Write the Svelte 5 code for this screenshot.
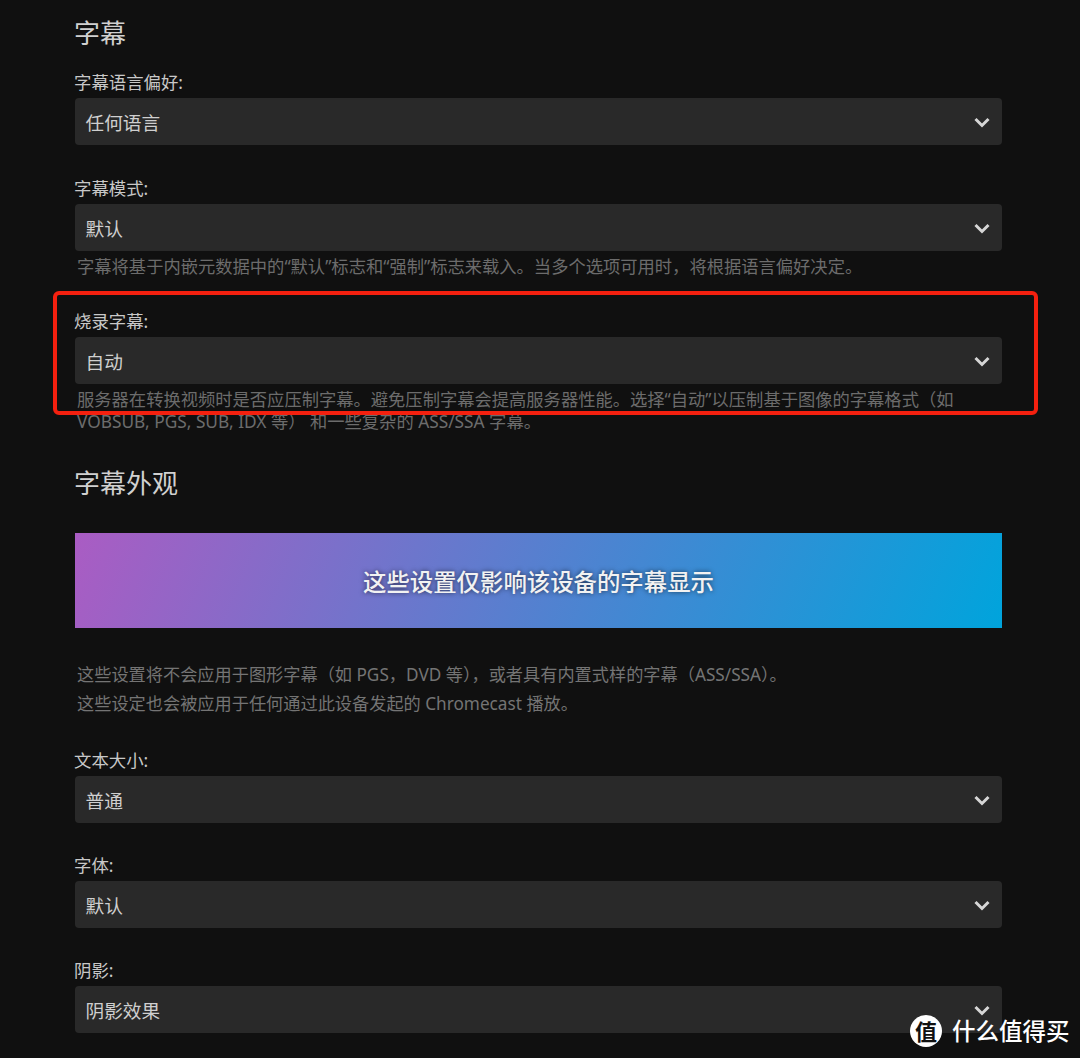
<script lang="ts">
  const subtitleFields = [
    { label: '字幕语言偏好:', value: '任何语言' },
    {
      label: '字幕模式:',
      value: '默认',
      help: ['字幕将基于内嵌元数据中的“默认”标志和“强制”标志来载入。当多个选项可用时，将根据语言偏好决定。']
    },
    {
      label: '烧录字幕:',
      value: '自动',
      help: [
        '服务器在转换视频时是否应压制字幕。避免压制字幕会提高服务器性能。选择“自动”以压制基于图像的字幕格式（如',
        'VOBSUB, PGS, SUB, IDX 等） 和一些复杂的 ASS/SSA 字幕。'
      ]
    }
  ];

  const appearanceFields = [
    { label: '文本大小:', value: '普通' },
    { label: '字体:', value: '默认' },
    { label: '阴影:', value: '阴影效果' }
  ];
</script>

{#snippet selectField(field)}
  <div class="field">
    <div class="label">{field.label}</div>
    <div class="select">
      <span>{field.value}</span>
      <svg class="chevron" width="18" height="12" viewBox="0 0 18 12" aria-hidden="true">
        <polyline points="2.5,3 9,9.5 15.5,3" fill="none" stroke="#d6d6d6" stroke-width="3" />
      </svg>
    </div>
    {#if field.help}
      <div class="help">
        {#each field.help as line}
          <div class="help-line">{line}</div>
        {/each}
      </div>
    {/if}
  </div>
{/snippet}

<main class="page">
  <h2 class="title first">字幕</h2>
  <section class="subtitles">
    {#each subtitleFields as field}
      {@render selectField(field)}
    {/each}
  </section>

  <h2 class="title second">字幕外观</h2>
  <div class="banner">这些设置仅影响该设备的字幕显示</div>
  <div class="notes">
    <div class="note-line">这些设置将不会应用于图形字幕（如 PGS，DVD 等），或者具有内置式样的字幕（ASS/SSA）。</div>
    <div class="note-line">这些设定也会被应用于任何通过此设备发起的 Chromecast 播放。</div>
  </div>
  {#each appearanceFields as field}
    {@render selectField(field)}
  {/each}

  <div class="highlight"></div>
  <div class="watermark">
    <span class="badge">值</span>
    <span class="brand">什么值得买</span>
  </div>
</main>

<style>
  :global(body) {
    background: #101010;
    overflow: hidden;
  }

  .page {
    position: relative;
    box-sizing: border-box;
    height: 1058px;
    overflow: hidden;
    padding: 15px 78px 0 75px;
    background: #101010;
    font-family: "Noto Sans", "Noto Sans CJK SC", sans-serif;
    color: #d4d4d4;
  }

  .title {
    height: 36px;
    margin: 0 0 0 -1px;
    font-size: 26px;
    line-height: 36px;
    font-weight: 400;
    color: #d0d0d0;
  }

  .first {
    margin-bottom: 19px;
  }

  .second {
    margin-top: 32px;
    margin-bottom: 32px;
  }

  .field {
    margin-bottom: 30px;
  }

  .subtitles .field {
    margin-bottom: 31px;
  }

  .label {
    height: 24px;
    line-height: 24px;
    margin: 0 0 4px -1px;
    font-size: 17.4px;
    color: #c8c8c8;
  }

  .select {
    display: flex;
    align-items: center;
    justify-content: space-between;
    box-sizing: border-box;
    height: 47px;
    padding: 0 11px 0 10.5px;
    border-radius: 4px;
    background: #292929;
    font-size: 18.7px;
    color: #cfcfcf;
  }

  .help {
    margin-top: 5px;
    padding-left: 2px;
    font-size: 17.3px;
    white-space: nowrap;
    color: #6c6c6c;
  }

  .help-line {
    height: 22px;
    line-height: 22px;
  }

  .banner {
    display: flex;
    align-items: center;
    justify-content: center;
    height: 95px;
    background: linear-gradient(112deg, #aa5cc3, #00a4dc);
    font-size: 23.4px;
    font-weight: 500;
    color: #f2f2f2;
    text-shadow: 0 0 5px rgba(0, 0, 0, 0.65);
  }

  .notes {
    margin: 32px 0 30px;
    padding-left: 2px;
    font-size: 17.2px;
    white-space: nowrap;
    color: #747474;
  }

  .note-line {
    height: 29px;
    line-height: 29px;
  }

  .highlight {
    position: absolute;
    left: 53px;
    top: 291px;
    width: 985px;
    height: 124px;
    box-sizing: border-box;
    border: 4px solid #f4200f;
    border-radius: 6px;
  }

  .watermark {
    position: absolute;
    left: 910px;
    top: 1015px;
    display: flex;
    align-items: center;
    gap: 10px;
  }

  .badge {
    display: flex;
    align-items: center;
    justify-content: center;
    width: 32px;
    height: 32px;
    border-radius: 50%;
    background: #fff;
    color: #111;
    font-size: 22px;
    font-weight: 700;
    line-height: 1;
  }

  .brand {
    font-size: 23.5px;
    line-height: 32px;
    font-weight: 500;
    color: #fff;
    white-space: nowrap;
  }
</style>
